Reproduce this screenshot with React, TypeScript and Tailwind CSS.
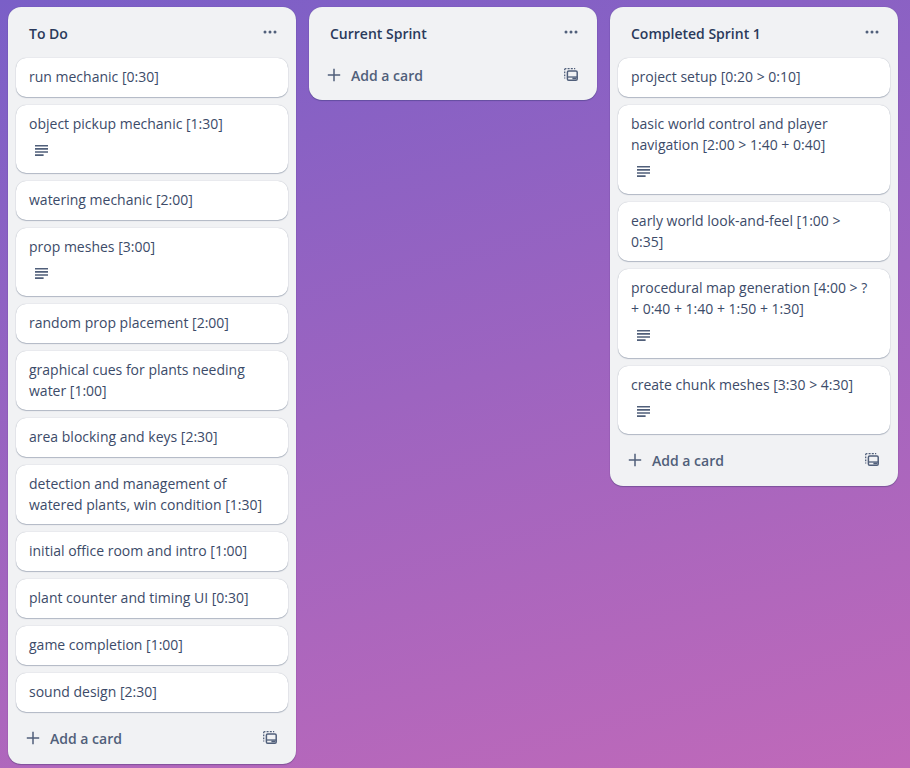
type CardData = { title: string; description?: boolean };
type ListData = { name: string; cards: CardData[] };

const lists: ListData[] = [
  {
    name: "To Do",
    cards: [
      { title: "run mechanic [0:30]" },
      { title: "object pickup mechanic [1:30]", description: true },
      { title: "watering mechanic [2:00]" },
      { title: "prop meshes [3:00]", description: true },
      { title: "random prop placement [2:00]" },
      { title: "graphical cues for plants needing water [1:00]" },
      { title: "area blocking and keys [2:30]" },
      { title: "detection and management of watered plants, win condition [1:30]" },
      { title: "initial office room and intro [1:00]" },
      { title: "plant counter and timing UI [0:30]" },
      { title: "game completion [1:00]" },
      { title: "sound design [2:30]" },
    ],
  },
  { name: "Current Sprint", cards: [] },
  {
    name: "Completed Sprint 1",
    cards: [
      { title: "project setup [0:20 > 0:10]" },
      { title: "basic world control and player navigation [2:00 > 1:40 + 0:40]", description: true },
      { title: "early world look-and-feel [1:00 > 0:35]" },
      { title: "procedural map generation [4:00 > ? + 0:40 + 1:40 + 1:50 + 1:30]", description: true },
      { title: "create chunk meshes [3:30 > 4:30]", description: true },
    ],
  },
];

function MoreIcon() {
  return (
    <svg width="14" height="4" viewBox="0 0 14 4" fill="currentColor" aria-hidden="true">
      <circle cx="2" cy="2" r="1.5" />
      <circle cx="7" cy="2" r="1.5" />
      <circle cx="12" cy="2" r="1.5" />
    </svg>
  );
}

function PlusIcon() {
  return (
    <svg width="14" height="14" viewBox="0 0 14 14" stroke="currentColor" strokeWidth="1.5" aria-hidden="true">
      <path d="M7 0.8V13.2M0.8 7H13.2" />
    </svg>
  );
}

function DescriptionIcon() {
  return (
    <svg width="13" height="11" viewBox="0 0 13 11" fill="currentColor" role="img" aria-label="This card has a description">
      <path d="M0 0h13v1.6H0zM0 3.1h13v1.6H0zM0 6.2h13v1.6H0zM0 9.3h8.6v1.6H0z" />
    </svg>
  );
}

function TemplateIcon() {
  return (
    <svg width="14" height="13" viewBox="0 0 14 13" fill="none" stroke="currentColor" strokeWidth="1.5" aria-hidden="true">
      <rect x="3.4" y="3" width="9.8" height="9.2" rx="1.3" />
      <path d="M3.4 9H13.2" strokeWidth="1.3" />
      <path d="M8.4 10.4H12.4" strokeWidth="1.8" />
      <path
        d="M0.7 2.2V1.6a.9.9 0 0 1 .9-.9h.8M3.6 0.7H5.6M6.8 0.7H8.8M10 0.7H11.2M0.7 3.4V5.2M0.7 6.4V8.2M0.7 9.4V10.6"
        strokeWidth="1.3"
      />
    </svg>
  );
}

function Card({ title, description }: CardData) {
  return (
    <li className="min-h-[39px] rounded-[10px] bg-white pt-2 pr-[19px] pb-[9px] pl-[13px] shadow-[0_1px_1px_#091e4240,0_0_1px_#091e424f]">
      <p>{title}</p>
      {description && (
        <div className="flex h-[30px] items-start px-1.5 pt-[11px] text-[#505f7a]">
          <DescriptionIcon />
        </div>
      )}
    </li>
  );
}

function List({ name, cards }: ListData) {
  return (
    <section className="w-72 shrink-0 rounded-[13px] bg-[#f1f2f4] shadow-[0_1px_1px_#091e4240,0_0_1px_#091e424f]">
      <header className="flex h-[51px] items-center justify-between pr-[19px] pl-[21px]">
        <h2 className="pt-[2px] font-semibold text-[#2a3a5b]">{name}</h2>
        <button type="button" aria-label="List actions" className="pb-[2px] text-[#505f7a]">
          <MoreIcon />
        </button>
      </header>
      {cards.length > 0 && (
        <ol className="flex flex-col gap-2 px-2">
          {cards.map((card) => (
            <Card key={card.title} {...card} />
          ))}
        </ol>
      )}
      <footer
        className={`flex items-center justify-between pr-[19px] pl-[18px] text-[#505f7a] ${
          cards.length > 0 ? "h-[52px]" : "h-[42px] pb-2"
        }`}
      >
        <button type="button" className="flex items-center gap-[10px] font-semibold">
          <PlusIcon />
          Add a card
        </button>
        <button type="button" aria-label="Create from template" className="pb-[2px]">
          <TemplateIcon />
        </button>
      </footer>
    </section>
  );
}

export default function App() {
  return (
    <main className="flex min-h-screen items-start gap-[13px] overflow-x-auto bg-linear-[165deg,#7a5fc7,#c069b9] px-2 pt-[7px] font-['Open_Sans','Noto_Sans',sans-serif] text-[14px] leading-[21px] text-[#3c4b69]">
      {lists.map((list) => (
        <List key={list.name} {...list} />
      ))}
    </main>
  );
}
